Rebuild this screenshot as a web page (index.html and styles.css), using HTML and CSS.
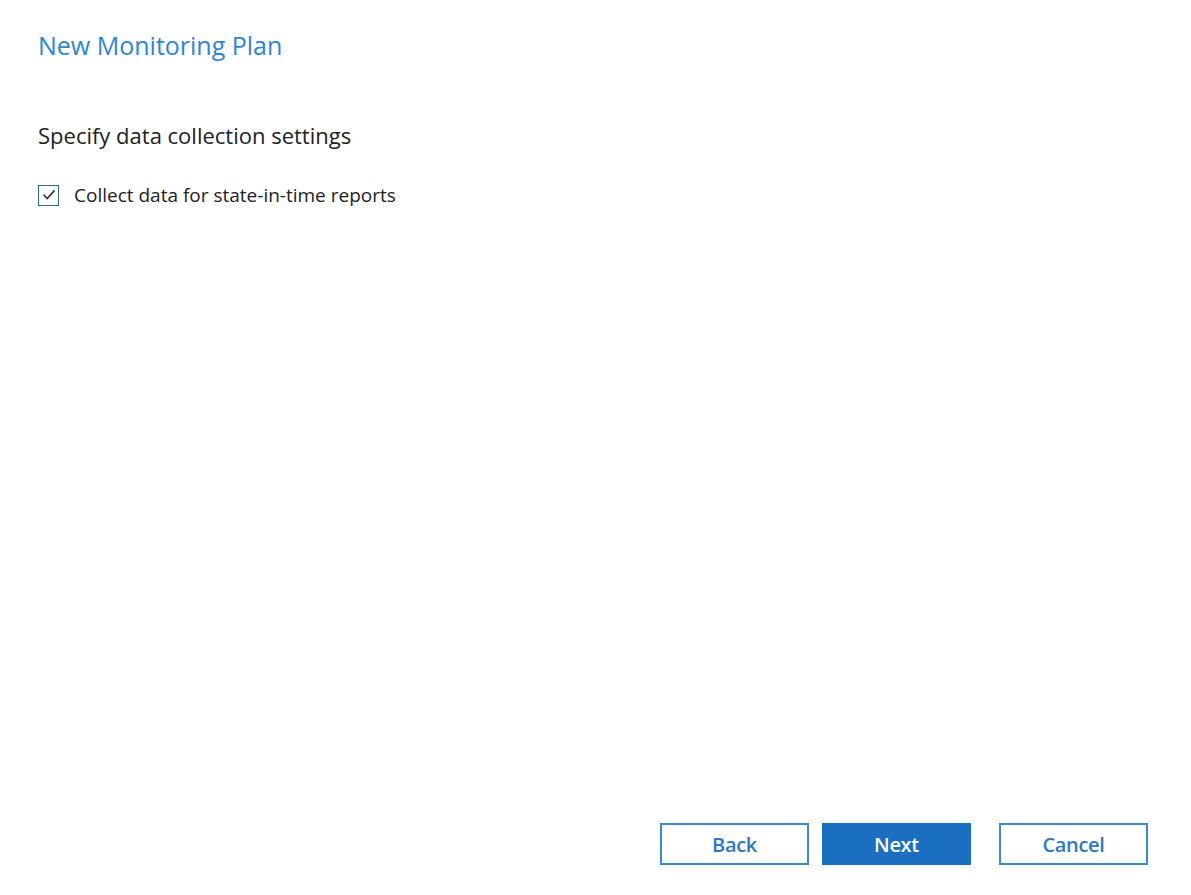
FILE: index.html
```html
<!DOCTYPE html>
<html>
<head>
<meta charset="utf-8">
<link rel="stylesheet" href="styles.css">
</head>
<body>
<div class="page">
  <h1 class="title">New Monitoring Plan</h1>
  <h2 class="subtitle">Specify data collection settings</h2>
  <label class="check-row">
    <span class="checkbox">
      <svg viewBox="0 0 20 20" width="20" height="20"><path d="M4.6 9.8 L8.2 13.6 L15.6 5.4" fill="none" stroke="#333333" stroke-width="1.6"/></svg>
    </span>
    <span class="check-label">Collect data for state-in-time reports</span>
  </label>
  <div class="spacer"></div>
  <div class="footer">
    <button class="btn btn-outline">Back</button>
    <button class="btn btn-primary">Next</button>
    <button class="btn btn-outline btn-cancel">Cancel</button>
  </div>
</div>
</body>
</html>
```
FILE: styles.css
```css
html, body {
  margin: 0;
  padding: 0;
  background: #ffffff;
}
.page {
  height: 895px;
  box-sizing: border-box;
  display: flex;
  flex-direction: column;
  padding: 28px 43px 30px 38px;
  font-family: "Open Sans", "Noto Sans", sans-serif;
}
.title {
  margin: 0;
  font-size: 25px;
  font-weight: 400;
  color: #2e86d1;
  line-height: 34px;
}
.subtitle {
  margin: 58px 0 0 0;
  font-size: 22px;
  font-weight: 400;
  color: #222;
  line-height: 30px;
}
.check-row {
  display: flex;
  align-items: center;
  margin-top: 32px;
  height: 26px;
}
.checkbox {
  width: 21px;
  height: 21px;
  border: 1.5px solid #2d6aa3;
  box-sizing: border-box;
  display: flex;
  align-items: center;
  justify-content: center;
  background: #fff;
  flex: none;
}
.checkbox svg {
  display: block;
  flex: none;
}
.check-label {
  margin-left: 15px;
  font-size: 19px;
  line-height: 26px;
  color: #222;
}
.spacer {
  flex: 1;
}
.footer {
  display: flex;
  justify-content: flex-end;
  gap: 13px;
}
.btn {
  width: 149px;
  height: 42px;
  box-sizing: border-box;
  font-family: "Open Sans", "Noto Sans", sans-serif;
  font-size: 20px;
  font-weight: 600;
  letter-spacing: -0.3px;
  padding: 0;
  cursor: pointer;
}
.btn-outline {
  background: #fff;
  border: 2px solid #3a8ad4;
  color: #2f78bf;
}
.btn-primary {
  background: #1a6fc1;
  border: 2px solid #1a6fc1;
  color: #fff;
}
.btn-cancel {
  margin-left: 15px;
}
```
